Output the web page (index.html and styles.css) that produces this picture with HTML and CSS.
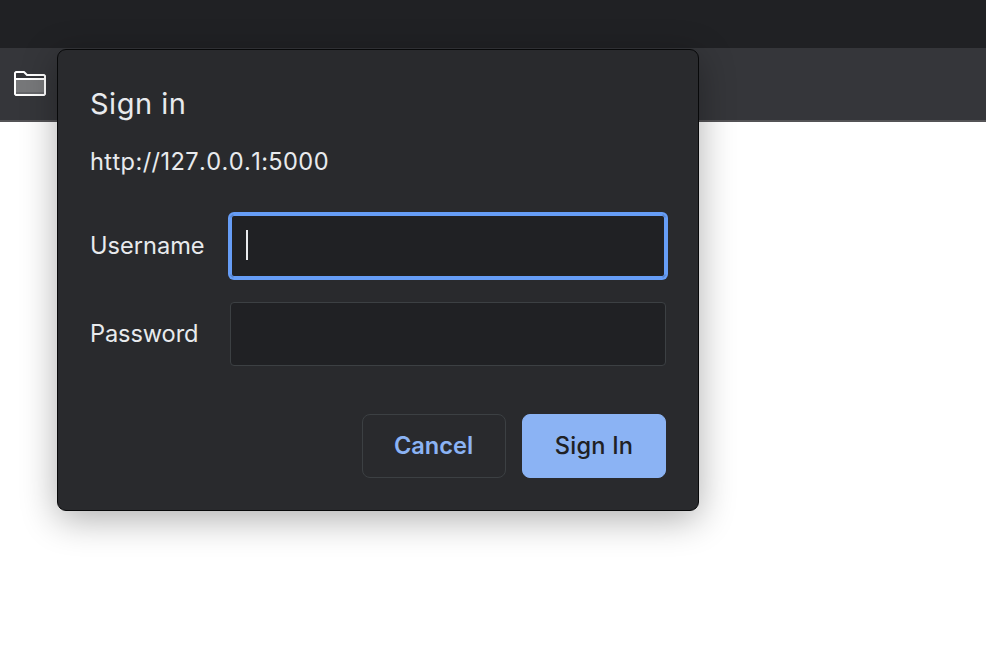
FILE: index.html
```html
<!DOCTYPE html>
<html lang="en">
<head>
<meta charset="utf-8">
<title>Sign in</title>
<link rel="stylesheet" href="styles.css">
</head>
<body>
<div class="tabstrip"></div>
<div class="toolbar">
  <svg class="folder" width="32" height="25" viewBox="0 0 32 25">
    <path d="M2 1H10L13 4H30L31 5V23L30 24H2L1 23V2Z" fill="#35363a"/>
    <path d="M2 9H30V23H2Z" fill="#77787a"/>
    <path d="M2 21H30V23H2Z" fill="#66676a"/>
    <path d="M1 8H31M2 1H10L13 4H30L31 5V23L30 24H2L1 23V2Z" fill="none" stroke="#fff" stroke-width="2" stroke-linejoin="round"/>
  </svg>
</div>
<form class="dialog">
  <h1 class="title">Sign in</h1>
  <p class="origin">http://127.0.0.1:5000</p>
  <div class="fields">
    <label class="label" for="user">Username</label>
    <div class="field focused" id="user"><span class="caret"></span></div>
    <label class="label password-label" for="pass">Password</label>
    <div class="field" id="pass"></div>
  </div>
  <div class="actions">
    <button type="button" class="button cancel">Cancel</button>
    <button type="button" class="button primary">Sign In</button>
  </div>
</form>
</body>
</html>
```
FILE: styles.css
```css
* { box-sizing: border-box; }
body { margin: 0; height: 660px; overflow: hidden; background: #fff; font-family: Inter, sans-serif; color: #e8eaed; }
.tabstrip { height: 48px; background: #202124; }
.toolbar { height: 74px; padding: 23px 14px; background: #35363a; border-bottom: 2px solid #545356; }
.folder { display: block; }
.dialog { position: absolute; left: 57px; top: 49px; width: 642px; height: 462px; padding: 34px 32px 32px; background: #292a2d; border: 1px solid #08090a; border-radius: 9px; box-shadow: 0 8px 36px rgba(0,0,0,.32); }
.title { margin: 0; height: 40px; font-size: 29px; line-height: 40px; font-weight: 420; letter-spacing: .5px; }
.origin { margin: 22px 0 0; height: 32px; font-size: 23.6px; line-height: 32px; font-weight: 430; letter-spacing: .4px; font-feature-settings: "calt" 0, "kern" 0; }
.fields { display: grid; grid-template-columns: 140px 436px; row-gap: 24px; margin-top: 36px; }
.label { font-size: 23.6px; line-height: 64px; font-weight: 430; }
.password-label { letter-spacing: -.1px; }
.field { height: 64px; padding: 15px; background: #202124; border: 1px solid #3c4043; border-radius: 4px; }
.focused { border-color: #669df6; box-shadow: 0 0 0 2px #669df6, inset 0 0 0 1px #669df6; }
.caret { display: block; width: 2px; height: 30px; background: #e8eaed; }
.actions { display: flex; justify-content: flex-end; gap: 16px; margin-top: 48px; }
.button { width: 144px; height: 64px; padding: 0 0 2px; border: 1px solid #3c4043; border-radius: 8px; background: transparent; color: #8bb3f4; font: 500 23.6px Inter, sans-serif; letter-spacing: .2px; }
.cancel { font-weight: 600; letter-spacing: 0; padding-right: 1px; }
.primary { background: #8bb3f4; border-color: #8bb3f4; color: #202124; }
```
